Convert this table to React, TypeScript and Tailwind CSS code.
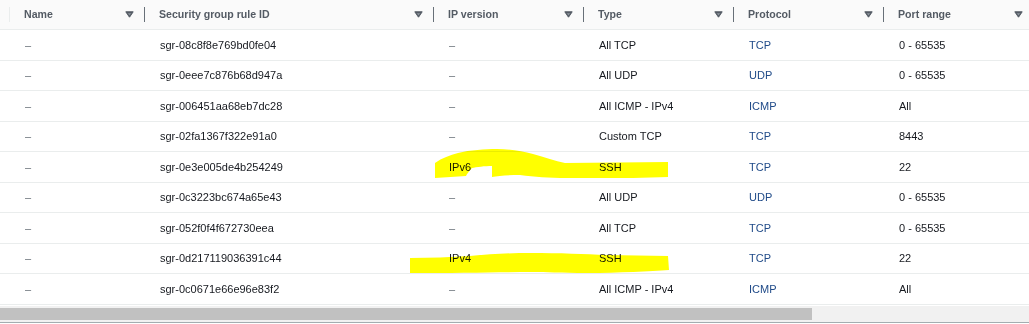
import React from "react";

type Rule = {
  id: string;
  ip: string;
  type: string;
  protocol: string;
  port: string;
};

const rules: Rule[] = [
  { id: "sgr-08c8f8e769bd0fe04", ip: "–", type: "All TCP", protocol: "TCP", port: "0 - 65535" },
  { id: "sgr-0eee7c876b68d947a", ip: "–", type: "All UDP", protocol: "UDP", port: "0 - 65535" },
  { id: "sgr-006451aa68eb7dc28", ip: "–", type: "All ICMP - IPv4", protocol: "ICMP", port: "All" },
  { id: "sgr-02fa1367f322e91a0", ip: "–", type: "Custom TCP", protocol: "TCP", port: "8443" },
  { id: "sgr-0e3e005de4b254249", ip: "IPv6", type: "SSH", protocol: "TCP", port: "22" },
  { id: "sgr-0c3223bc674a65e43", ip: "–", type: "All UDP", protocol: "UDP", port: "0 - 65535" },
  { id: "sgr-052f0f4f672730eea", ip: "–", type: "All TCP", protocol: "TCP", port: "0 - 65535" },
  { id: "sgr-0d217119036391c44", ip: "IPv4", type: "SSH", protocol: "TCP", port: "22" },
  { id: "sgr-0c0671e66e96e83f2", ip: "–", type: "All ICMP - IPv4", protocol: "ICMP", port: "All" },
];

const cols = "grid grid-cols-[9px_135px_289px_150px_150px_150px_150px]";

function Caret() {
  return (
    <svg width="9" height="7" viewBox="0 0 9 7" className="shrink-0">
      <polygon points="0.8,0.8 8.2,0.8 4.5,6.2" fill="#545b64" stroke="#545b64" strokeLinejoin="round" />
      <polygon points="2.8,2.3 6.2,2.3 4.5,4.6" fill="#8d959e" />
    </svg>
  );
}

function HeadCell({ label, first }: { label: string; first?: boolean }) {
  return (
    <div className="relative flex items-center justify-between pl-[15px] pr-[10px]">
      <span
        className={
          first
            ? "absolute left-0 top-[7px] h-[15px] w-px bg-[#eaeded]"
            : "absolute left-0 top-[7px] h-[15px] w-px bg-[#687078]"
        }
      />
      <span className="text-[10.6px] font-bold text-[#545b64]">{label}</span>
      <Caret />
    </div>
  );
}

function Cell({ children, className = "" }: { children: React.ReactNode; className?: string }) {
  return <div className={"flex items-center pl-[16px] whitespace-nowrap " + className}>{children}</div>;
}

function Value({ v, className = "text-[#16191f]" }: { v: string; className?: string }) {
  if (v === "–") return <Cell className="text-[#687078]">–</Cell>;
  return <Cell className={className}>{v}</Cell>;
}

export default function App() {
  return (
    <div
      className="relative h-[324px] w-[1029px] overflow-hidden bg-white text-[11px]"
      style={{ fontFamily: '"Liberation Sans", Arial, sans-serif' }}
    >
      <div className={cols + " h-[30px] border-b border-[#eaeded] bg-[#fafafa]"}>
        <div />
        <HeadCell label="Name" first />
        <HeadCell label="Security group rule ID" />
        <HeadCell label="IP version" />
        <HeadCell label="Type" />
        <HeadCell label="Protocol" />
        <HeadCell label="Port range" />
      </div>

      {rules.map((r) => (
        <div key={r.id} className={cols + " h-[30.5px] border-b border-[#eaeded]"}>
          <div />
          <Value v="–" />
          <Value v={r.id} />
          <Value v={r.ip} />
          <Value v={r.type} />
          <Value v={r.protocol} className="text-[#1f4a88]" />
          <Value v={r.port} />
        </div>
      ))}

      <div className="mt-[1px] h-[16px] bg-[#f1f1f1] py-[2px]">
        <div className="h-full w-[812px] bg-[#c1c1c1]" />
      </div>
      <div className="h-px bg-[#a3adb0]" />

      <svg
        className="pointer-events-none absolute left-0 top-0 mix-blend-multiply"
        width="1029"
        height="324"
        viewBox="0 0 1029 324"
      >
        <path
          d="M435,163 C442,158 450,155 458,153 C470,150 485,149 497,149 C510,149 522,151 533,154 C545,157 555,161 565,163 L668,162 L668,177 L633,178 L567,178 C548,178 535,177 520,175 C508,175 498,176 492,177 L492,166 C485,166 476,167 472,168 C469,171 467,174 466,176 L435,178 Z"
          fill="#ffff00"
        />
        <path
          d="M410,258 C430,258 450,257 470,256 C490,254 510,253 530,253 C560,253 585,254 607,255 L668,256 L669,270 C650,271 620,273 587,273 C560,273 545,272 533,272 C500,272 460,273 410,273 Z"
          fill="#ffff00"
        />
      </svg>
    </div>
  );
}
